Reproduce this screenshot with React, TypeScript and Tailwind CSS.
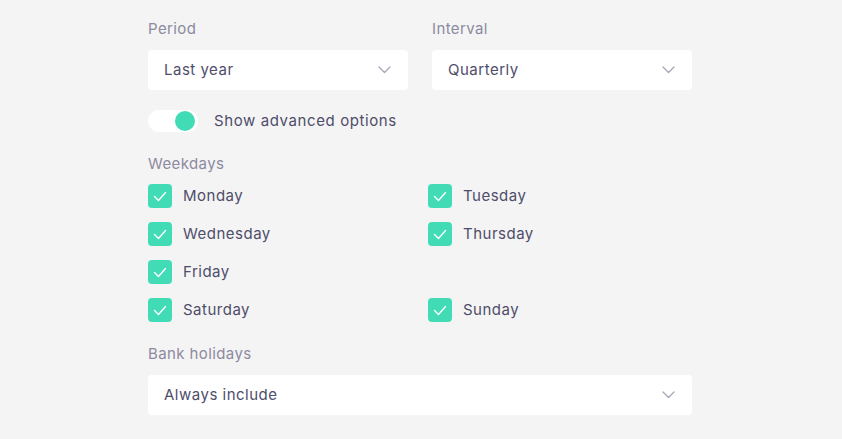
import { useState } from "react";

const font = { fontFamily: "Inter, 'Open Sans', sans-serif" };

function Chevron() {
  return (
    <svg width="13" height="8" viewBox="0 0 13 8" fill="none" className="shrink-0">
      <path d="M1 1l5.5 5.5L12 1" stroke="#a6a5b5" strokeWidth="1.3" strokeLinecap="round" strokeLinejoin="round" />
    </svg>
  );
}

function Select({ value }: { value: string }) {
  return (
    <div className="flex h-10 items-center justify-between rounded bg-white pl-4 pr-[17px] text-[15px] tracking-[0.5px] text-[#4f4d6a]">
      <span>{value}</span>
      <Chevron />
    </div>
  );
}

function Label({ children, className = "" }: { children: string; className?: string }) {
  return <div className={`text-[15px] leading-5 tracking-[0.4px] text-[#8c8a9f] ${className}`}>{children}</div>;
}

function Checkbox({ label }: { label: string }) {
  const [checked, setChecked] = useState(true);
  return (
    <label className="flex h-6 cursor-pointer items-center gap-[11px] text-[15px] tracking-[0.5px] text-[#4f4d6a]">
      <span
        onClick={() => setChecked(!checked)}
        className={`flex h-6 w-6 items-center justify-center rounded-sm ${checked ? "bg-[#41dcb6]" : "bg-white"}`}
      >
        {checked && (
          <svg width="14" height="11" viewBox="0 0 14 11" fill="none">
            <path d="M1.5 5.5l4 4L12.5 1.5" stroke="white" strokeWidth="1.4" strokeLinecap="round" strokeLinejoin="round" />
          </svg>
        )}
      </span>
      {label}
    </label>
  );
}

export default function App() {
  const [advanced, setAdvanced] = useState(true);
  return (
    <div className="min-h-screen bg-[#f4f4f4] pt-[19px]" style={font}>
      <div className="ml-[148px] w-[544px]">
        <div className="grid grid-cols-2 gap-6">
          <div>
            <Label className="mb-[11px]">Period</Label>
            <Select value="Last year" />
          </div>
          <div>
            <Label className="mb-[11px]">Interval</Label>
            <Select value="Quarterly" />
          </div>
        </div>

        <div className="mt-[19px] flex h-6 items-center gap-4 text-[15px] tracking-[0.6px] text-[#4f4d6a]">
          <button
            onClick={() => setAdvanced(!advanced)}
            className={`flex h-[22px] w-[50px] items-center rounded-full bg-white px-[3px] ${advanced ? "justify-end" : "justify-start"}`}
          >
            <span className={`h-5 w-5 rounded-full ${advanced ? "bg-[#41dcb6]" : "bg-[#d6d6de]"}`} />
          </button>
          Show advanced options
        </div>

        <Label className="mt-[21px]">Weekdays</Label>
        <div className="mt-[10px] grid grid-cols-[280px_1fr] gap-y-[14px]">
          <Checkbox label="Monday" />
          <Checkbox label="Tuesday" />
          <Checkbox label="Wednesday" />
          <Checkbox label="Thursday" />
          <Checkbox label="Friday" />
          <div />
          <Checkbox label="Saturday" />
          <Checkbox label="Sunday" />
        </div>

        <Label className="mb-[11px] mt-[22px]">Bank holidays</Label>
        <Select value="Always include" />
      </div>
    </div>
  );
}
